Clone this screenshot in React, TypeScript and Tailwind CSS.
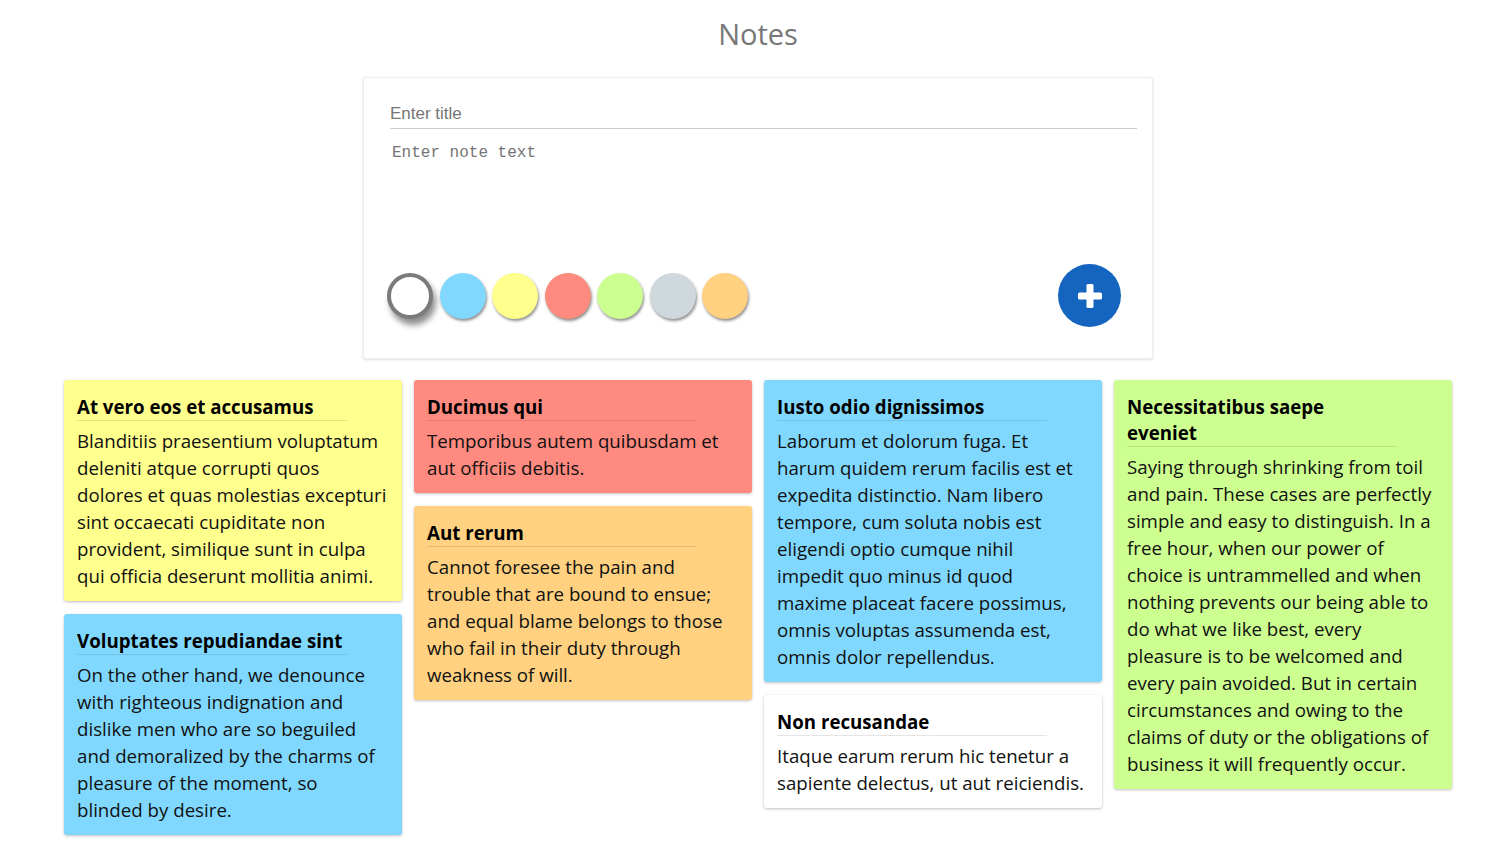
import React, { useState } from "react";

type Note = { title: string[]; lines: string[]; color: string };

const COLORS = ["#ffffff", "#80d8ff", "#ffff8d", "#ff8a80", "#ccff90", "#cfd8dc", "#ffd180"];

const columns: Note[][] = [
  [
    {
      title: ["At vero eos et accusamus"],
      lines: [
        "Blanditiis praesentium voluptatum",
        "deleniti atque corrupti quos",
        "dolores et quas molestias excepturi",
        "sint occaecati cupiditate non",
        "provident, similique sunt in culpa",
        "qui officia deserunt mollitia animi.",
      ],
      color: "#ffff8d",
    },
    {
      title: ["Voluptates repudiandae sint"],
      lines: [
        "On the other hand, we denounce",
        "with righteous indignation and",
        "dislike men who are so beguiled",
        "and demoralized by the charms of",
        "pleasure of the moment, so",
        "blinded by desire.",
      ],
      color: "#80d8ff",
    },
  ],
  [
    {
      title: ["Ducimus qui"],
      lines: ["Temporibus autem quibusdam et", "aut officiis debitis."],
      color: "#ff8a80",
    },
    {
      title: ["Aut rerum"],
      lines: [
        "Cannot foresee the pain and",
        "trouble that are bound to ensue;",
        "and equal blame belongs to those",
        "who fail in their duty through",
        "weakness of will.",
      ],
      color: "#ffd180",
    },
  ],
  [
    {
      title: ["Iusto odio dignissimos"],
      lines: [
        "Laborum et dolorum fuga. Et",
        "harum quidem rerum facilis est et",
        "expedita distinctio. Nam libero",
        "tempore, cum soluta nobis est",
        "eligendi optio cumque nihil",
        "impedit quo minus id quod",
        "maxime placeat facere possimus,",
        "omnis voluptas assumenda est,",
        "omnis dolor repellendus.",
      ],
      color: "#80d8ff",
    },
    {
      title: ["Non recusandae"],
      lines: ["Itaque earum rerum hic tenetur a", "sapiente delectus, ut aut reiciendis."],
      color: "#ffffff",
    },
  ],
  [
    {
      title: ["Necessitatibus saepe", "eveniet"],
      lines: [
        "Saying through shrinking from toil",
        "and pain. These cases are perfectly",
        "simple and easy to distinguish. In a",
        "free hour, when our power of",
        "choice is untrammelled and when",
        "nothing prevents our being able to",
        "do what we like best, every",
        "pleasure is to be welcomed and",
        "every pain avoided. But in certain",
        "circumstances and owing to the",
        "claims of duty or the obligations of",
        "business it will frequently occur.",
      ],
      color: "#ccff90",
    },
  ],
];

function NoteCard({ note }: { note: Note }) {
  return (
    <div
      className="w-[338px] rounded-[3px] pt-[14px] pb-[12px] px-[13px] shadow-[0_1px_3px_rgba(0,0,0,0.25)]"
      style={{ backgroundColor: note.color }}
    >
      <h3 className="w-[270px] text-[18.7px] leading-[26px] font-bold text-black border-b border-black/10 pb-0">
        {note.title.map((t, i) => (
          <span key={i} className="block whitespace-nowrap">
            {t}
          </span>
        ))}
      </h3>
      <p className="mt-[6px] text-[18.7px] leading-[27px] text-[#111]">
        {note.lines.map((l, i) => (
          <span key={i} className="block whitespace-nowrap">
            {l}
          </span>
        ))}
      </p>
    </div>
  );
}

export default function App() {
  const [selected, setSelected] = useState(0);

  return (
    <div className="min-h-screen bg-white pl-[6px] font-['Open_Sans',sans-serif]">
      <h1 className="pt-[14px] text-center text-[29px] leading-[40px] text-[#777]">Notes</h1>

      <div className="mx-auto mt-[23px] w-[790px] h-[282px] rounded-[2px] border border-[#eee] bg-white shadow-[0_1px_3px_rgba(0,0,0,0.12)] pl-[26px] pr-[15px] pt-[24px] flex flex-col">
        <input
          placeholder="Enter title"
          className="w-full border-b border-[#ccc] pb-[2px] text-[17px] leading-[24px] font-['Liberation_Sans',sans-serif] text-[#333] placeholder:text-[#757575] outline-none"
        />
        <textarea
          placeholder="Enter note text"
          className="mt-[14px] h-[100px] w-full resize-none pl-[2px] text-[16px] leading-[20px] font-['Liberation_Mono',monospace] placeholder:text-[#757575] outline-none"
        />
        <div className="mt-[21px] flex items-center justify-between pr-[16px]">
          <div className="ml-[-3px] flex items-center gap-[6.5px]">
            {COLORS.map((c, i) => (
              <button
                key={c}
                onClick={() => setSelected(i)}
                className={
                  i === selected
                    ? "w-[46px] h-[46px] rounded-full border-[4px] border-[#7b7b7b] shadow-[3px_6px_6px_rgba(0,0,0,0.45)]"
                    : "w-[46px] h-[46px] rounded-full shadow-[1px_2px_3px_rgba(0,0,0,0.45)]"
                }
                style={{ backgroundColor: c }}
              />
            ))}
          </div>
          <button className="w-[63px] h-[63px] rounded-full bg-[#1565c0] flex items-center justify-center">
            <svg width="28" height="28" viewBox="0 0 28 28">
              <rect x="10.5" y="2" width="7" height="24" rx="1.5" fill="white" />
              <rect x="2" y="10.5" width="24" height="7" rx="1.5" fill="white" />
            </svg>
          </button>
        </div>
      </div>

      <div className="mt-[21px] flex justify-center gap-[12px] pb-[12px]">
        {columns.map((col, i) => (
          <div key={i} className="flex flex-col gap-[13px]">
            {col.map((n) => (
              <NoteCard key={n.title.join(" ")} note={n} />
            ))}
          </div>
        ))}
      </div>
    </div>
  );
}
